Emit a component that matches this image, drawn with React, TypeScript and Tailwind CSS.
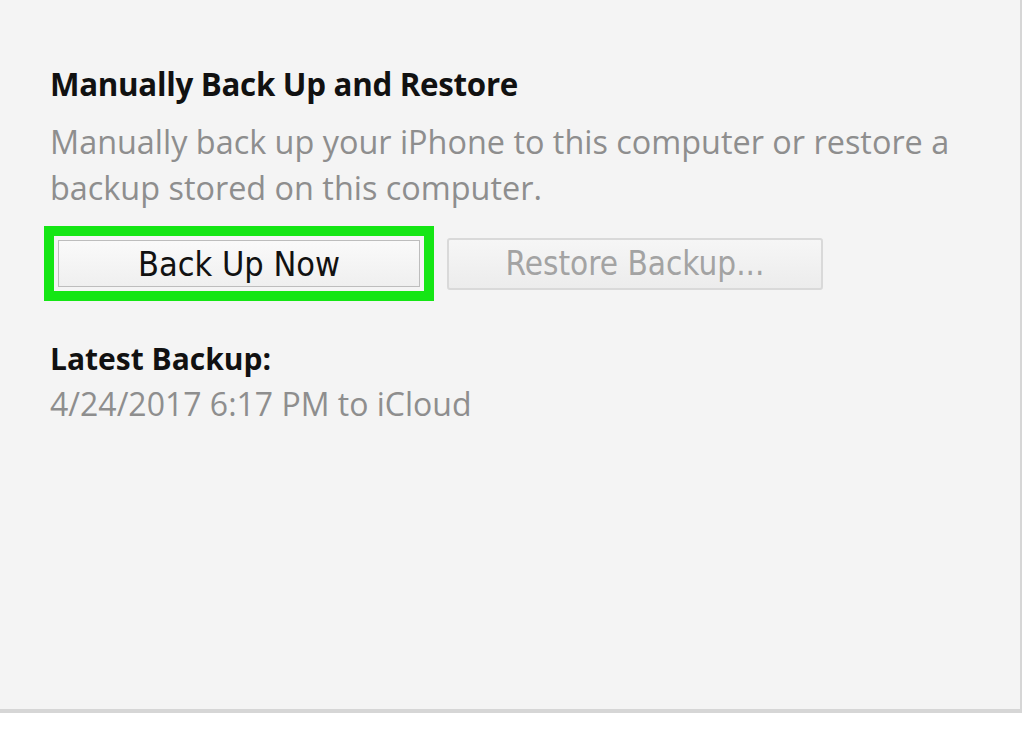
export default function App() {
  return (
    <div className="h-[743px] w-[1024px] bg-white">
      <section className="h-[713px] w-[1022px] border-r-2 border-b-4 border-[#d6d6d6] bg-[#f4f4f4] pl-[50px] pt-[64px] font-['Open_Sans',sans-serif]">
        <h2 className="text-[31.3px] leading-[40px] font-bold tracking-[-0.3px] text-[#111]">
          Manually Back Up and Restore
        </h2>
        <p className="mt-[14px] text-[32.4px] leading-[46px] text-[#8e8e8e]">
          Manually back up your iPhone to this computer or restore a
          <br />
          backup stored on this computer.
        </p>

        <div className="mt-[16px] ml-[-6px] flex items-center gap-[13px]">
          <div className="border-[10px] border-[#14e614] p-[4px]">
            <button className="h-[47px] w-[362px] border border-[#bdbdbd] bg-gradient-to-b from-[#fafafa] to-[#efefef] font-['DejaVu_Sans_Condensed',sans-serif] text-[34px] leading-none text-[#111]">
              Back Up Now
            </button>
          </div>
          <button className="h-[52px] w-[376px] rounded-[3px] border-2 border-[#d9d9d9] bg-gradient-to-b from-[#f6f6f6] to-[#ececec] font-['DejaVu_Sans_Condensed',sans-serif] text-[33px] leading-none text-[#a3a3a3]">
            Restore Backup...
          </button>
        </div>

        <h3 className="mt-[38px] text-[30px] leading-[40px] font-bold text-[#111]">Latest Backup:</h3>
        <p className="mt-[5px] text-[32px] leading-[40px] text-[#8e8e8e]">4/24/2017 6:17 PM to iCloud</p>
      </section>
    </div>
  );
}
